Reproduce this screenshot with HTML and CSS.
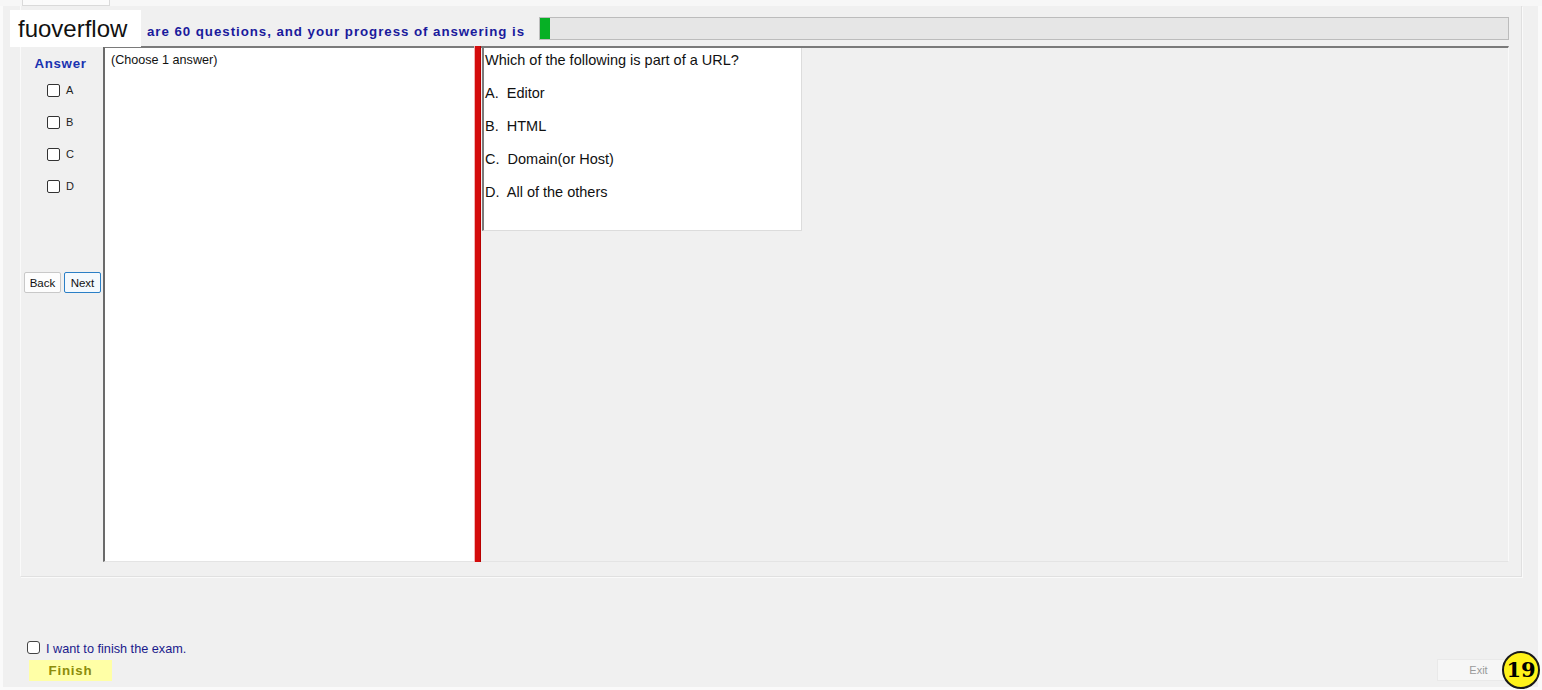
FILE: index.html
```html
<!DOCTYPE html>
<html>
<head>
<meta charset="utf-8">
<link rel="stylesheet" href="styles.css">
</head>
<body>
<div class="topstrip"><div class="tab"></div></div>
<div class="window">
  <div class="group">
    <div class="header">
      <span class="header-text">are 60 questions, and your progress of answering is</span>
      <div class="progress"><div class="progress-fill" style="width:10px"></div></div>
    </div>
    <div class="panel">
      <div class="answer-col">
        <div class="answer-title">Answer</div>
        <label class="opt"><span class="cb"></span><span class="opt-label">A</span></label>
        <label class="opt"><span class="cb"></span><span class="opt-label">B</span></label>
        <label class="opt"><span class="cb"></span><span class="opt-label">C</span></label>
        <label class="opt"><span class="cb"></span><span class="opt-label">D</span></label>
        <div class="nav">
          <button class="btn">Back</button>
          <button class="btn btn-next">Next</button>
        </div>
      </div>
      <div class="answer-box">(Choose 1 answer)</div>
      <div class="splitter"></div>
      <div class="right-area">
        <div class="question">
          <p>Which of the following is part of a URL?</p>
          <p>A.  Editor</p>
          <p>B.  HTML</p>
          <p>C.  Domain(or Host)</p>
          <p>D.  All of the others</p>
        </div>
      </div>
    </div>
  </div>
  <div class="bottom">
    <div class="finish-col">
      <label class="finish-check"><span class="cb cb-round"></span><span class="finish-label">I want to finish the exam.</span></label>
      <button class="finish-btn">Finish</button>
    </div>
    <button class="exit-btn">Exit</button>
  </div>
</div>
<div class="watermark">fuoverflow</div>
<div class="badge">19</div>
</body>
</html>
```
FILE: styles.css
```css
* { box-sizing: border-box; }
html, body { margin: 0; padding: 0; }
body {
  width: 1542px;
  height: 690px;
  background: #fafafa;
  font-family: "Liberation Sans", Arial, sans-serif;
  position: relative;
  overflow: hidden;
  color: #111;
}
.topstrip { height: 6px; padding-left: 22px; background: #f7f7f7; }
.tab {
  width: 88px; height: 6px;
  background: #fbfbfb;
  border: 1px solid #dadada;
  border-top: none;
}
.window {
  margin: 0 4px 0 3px;
  height: 681px;
  background: #f0f0f0;
  display: flex;
  flex-direction: column;
}
.group {
  margin-left: 17px;
  width: 1502px;
  height: 571px;
  border-right: 1px solid #e0e0e0;
  border-bottom: 1px solid #e0e0e0;
  border-left: 1px solid #fafafa;
  box-shadow: 1px 1px 0 #fafafa;
  padding-left: 1px;
}
.header {
  height: 40px;
  display: flex;
  align-items: flex-start;
  padding-left: 125px;
}
.header-text {
  margin-top: 18px;
  font-family: "Liberation Sans", Arial, sans-serif;
  font-weight: bold;
  font-size: 13.3px;
  letter-spacing: 0.95px;
  line-height: 16px;
  color: #1a1a9c;
  white-space: nowrap;
}
.progress {
  margin-top: 11px;
  margin-left: 14px;
  width: 970px;
  height: 23px;
  background: #e6e6e6;
  border: 1px solid #bcbcbc;
}
.progress-fill { height: 100%; background: #06b025; }
.panel {
  width: 1487px;
  height: 516px;
  display: flex;
}
.answer-col {
  width: 81px;
  display: flex;
  flex-direction: column;
}
.answer-title {
  margin-top: 10px;
  text-align: center;
  font-family: "Liberation Sans", Arial, sans-serif;
  font-weight: bold;
  font-size: 13.3px;
  letter-spacing: 0.7px;
  line-height: 16px;
  color: #1a33b0;
  padding-right: 4px;
}
.opt {
  height: 32px;
  display: flex;
  align-items: center;
  padding-left: 25px;
}
.answer-title + .opt { margin-top: 2px; }
.cb {
  width: 13px; height: 13px;
  border: 1px solid #333;
  border-radius: 2px;
  background: #fff;
  display: inline-block;
}
.opt-label { margin-left: 6px; font-size: 11px; color: #222; }
.nav {
  margin-top: 70px;
  padding-left: 2px;
  display: flex;
  gap: 3px;
}
.btn {
  width: 37px; height: 21px;
  padding: 0;
  font-family: "Liberation Sans", Arial, sans-serif;
  font-size: 11.5px;
  color: #111;
  background: #fdfdfd;
  border: 1px solid #c8c8c8;
  border-radius: 2px;
}
.btn-next { border-color: #2a7fc6; background: #f4f9fd; }
.answer-box {
  width: 371px;
  background: #fff;
  border-left: 2px solid #6a6a6a;
  border-top: 2px solid #7a7a7a;
  border-bottom: 1px solid #e4e4e4;
  padding: 5px 0 0 6px;
  font-size: 12.6px;
  line-height: 14px;
}
.splitter {
  width: 7px;
  background: #d40c0c;
  border-left: 1px solid #f1b5b5;
  border-right: 1px solid #b80000;
}
.right-area {
  flex: 1;
  border-top: 2px solid #7a7a7a;
  border-right: 1px solid #fafafa;
  border-bottom: 1px solid #e4e4e4;
  padding-left: 1px;
}
.question {
  width: 320px;
  height: 183px;
  background: #fff;
  border-left: 2px solid #7a7a7a;
  border-right: 1px solid #dcdcdc;
  border-bottom: 1px solid #dcdcdc;
  padding: 3px 0 0 1px;
}
.question p {
  margin: 0 0 15px 0;
  font-size: 14.5px;
  line-height: 18px;
  white-space: pre;
  color: #111;
}
.bottom {
  flex: 1;
  display: flex;
  justify-content: space-between;
  align-items: flex-end;
  padding: 0 18px 6px 24px;
}
.finish-col { display: flex; flex-direction: column; }
.finish-check {
  display: flex;
  align-items: center;
  height: 14px;
}
.cb-round { border-radius: 3px; border-color: #444; }
.finish-label {
  margin-left: 6px;
  margin-top: 3px;
  font-size: 12.7px;
  color: #1a1a8c;
}
.finish-btn {
  margin-top: 6px;
  margin-left: 2px;
  width: 83px; height: 21px;
  padding: 0;
  border: none;
  background: #ffffa6;
  font-family: "Liberation Sans", Arial, sans-serif;
  font-weight: bold;
  font-size: 13.3px;
  letter-spacing: 0.8px;
  color: #8c8c0a;
}
.exit-btn {
  width: 83px; height: 22px;
  padding: 0;
  border: 1px solid #e9e9e9;
  background: #f6f6f6;
  font-family: "Liberation Sans", Arial, sans-serif;
  font-size: 11px;
  color: #9a9a9a;
}
.watermark {
  position: absolute;
  left: 10px; top: 10px;
  width: 131px; height: 37px;
  background: #fff;
  font-size: 24px;
  line-height: 37px;
  padding-left: 8px;
  color: #111;
}
.badge {
  position: absolute;
  left: 1502px; top: 651px;
  width: 38px; height: 38px;
  border-radius: 50%;
  background: #fff21a;
  border: 2px solid #1a1a1a;
  font-family: "DejaVu Serif", "Liberation Serif", serif;
  font-weight: bold;
  font-size: 21px;
  line-height: 34px;
  text-align: center;
  color: #000;
}
```
